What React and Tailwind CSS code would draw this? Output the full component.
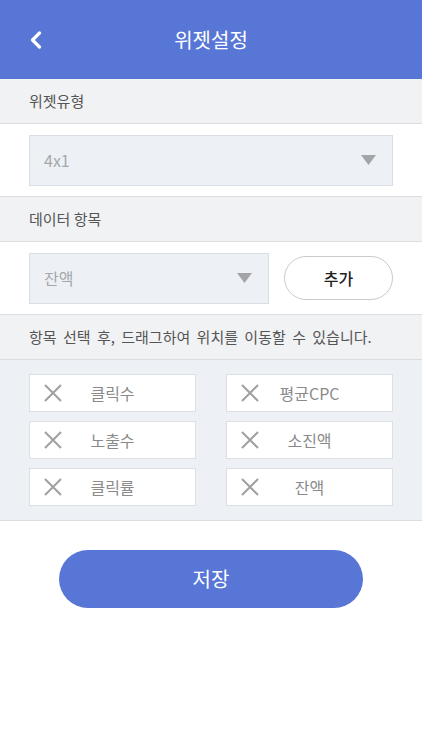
import { ChevronLeft } from "lucide-react";

const items = ["클릭수", "평균CPC", "노출수", "소진액", "클릭률", "잔액"];

const SectionTitle = ({ children, first }) => (
  <div
    className={`flex items-center px-[29px] bg-[#f1f2f4] border-[#dcdde0] text-[15px] text-[#555] ${
      first ? "h-[45px] border-b" : "h-[46px] border-y"
    }`}
  >
    {children}
  </div>
);

const Triangle = () => (
  <svg width="15" height="10" viewBox="0 0 15 10">
    <path d="M0 0 L15 0 L7.5 10 Z" fill="#a2a4a8" />
  </svg>
);

const SelectBox = ({ value, className }) => (
  <div
    className={`h-[51px] flex items-center justify-between pl-[14px] pr-[16px] bg-[#edf1f5] border border-[#d9dee4] text-[16px] text-[#a5a7aa] ${className}`}
  >
    <span>{value}</span>
    <Triangle />
  </div>
);

const Chip = ({ label }) => (
  <div className="relative h-[38px] flex items-center justify-center bg-white border border-[#dcdfe4] text-[16px] text-[#8a8a8a]">
    <svg
      className="absolute left-[14px] top-1/2 -translate-y-1/2"
      width="18"
      height="18"
      viewBox="0 0 18 18"
    >
      <path d="M1 1 L17 17 M17 1 L1 17" stroke="#a0a0a0" strokeWidth="2" />
    </svg>
    <span>{label}</span>
  </div>
);

export default function App() {
  return (
    <div
      className="w-[422px] min-h-[750px] bg-white"
      style={{ fontFamily: '"Noto Sans CJK KR", "Noto Sans", sans-serif' }}
    >
      {/* Header */}
      <div className="relative h-[79px] bg-[#5776d5] flex items-center justify-center">
        <ChevronLeft
          className="absolute left-[22px] top-[26px] text-white"
          size={28}
          strokeWidth={2.75}
        />
        <span className="text-white text-[20px]">위젯설정</span>
      </div>

      <SectionTitle first>위젯유형</SectionTitle>
      <div className="h-[72px] flex items-center px-[29px]">
        <SelectBox value="4x1" className="w-full" />
      </div>

      <SectionTitle>데이터 항목</SectionTitle>
      <div className="h-[72px] flex items-center px-[29px] gap-[15px]">
        <SelectBox value="잔액" className="w-[240px]" />
        <button className="flex-1 h-[44px] rounded-full border border-[#c9cbce] bg-white text-[16px] font-medium text-[#222]">
          추가
        </button>
      </div>

      <SectionTitle>
        <span className="[word-spacing:3px]">
          항목 선택 후, 드래그하여 위치를 이동할 수 있습니다.
        </span>
      </SectionTitle>
      <div className="bg-[#edf1f5] border-b border-[#dcdde0] px-[29px] pt-[14px] pb-[14px]">
        <div className="grid grid-cols-2 gap-x-[30px] gap-y-[9px]">
          {items.map((item) => (
            <Chip key={item} label={item} />
          ))}
        </div>
      </div>

      <div className="flex justify-center pt-[29px]">
        <button className="w-[304px] h-[58px] rounded-full bg-[#5776d5] text-white text-[20px]">
          저장
        </button>
      </div>
    </div>
  );
}
